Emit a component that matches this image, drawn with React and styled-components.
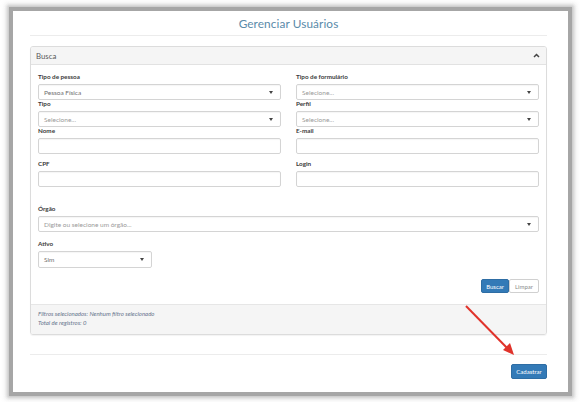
import React from "react";
import styled, { createGlobalStyle } from "styled-components";

const Global = createGlobalStyle`
  html, body { margin: 0; padding: 0; background: #ffffff; }
  body { width: 580px; height: 402px; overflow: hidden; font-family: Lato, "Open Sans", Arial, sans-serif; }
`;

const Frame = styled.div`
  position: relative;
  margin: 11px 0 0 13px;
  width: 555px;
  height: 381px;
  background: #fff;
  box-sizing: border-box;
  padding: 0 21px 0 17px;
  box-shadow: 0 0 0 4px #a6a6a6, 0 0 3px 6px rgba(160,160,160,0.5), 0 0 5px 8px rgba(215,215,215,0.35);
`;

const TitleBar = styled.div`
  height: 24px;
  border-bottom: 1px solid #ececec;
  display: flex;
  align-items: center;
  justify-content: center;
`;

const Title = styled.h1`
  margin: 0;
  font-weight: 400;
  font-size: 11.8px;
  color: #5a8aa9;
  letter-spacing: 0.1px;
`;

const Panel = styled.section`
  margin-top: 10px;
  border: 1px solid #dcdcdc;
  border-radius: 3px;
  box-shadow: 0 1px 1px rgba(0,0,0,0.05);
  overflow: hidden;
`;

const PanelHeader = styled.div`
  height: 17px;
  background: #f5f5f5;
  border-bottom: 1px solid #e2e2e2;
  display: flex;
  align-items: center;
  justify-content: space-between;
  padding: 0 6px 0 5px;
  font-size: 7.8px;
  color: #5a5a5a;
`;

const PanelBody = styled.div`
  padding: 8px 7px 11px 7px;
`;

const Row = styled.div`
  display: grid;
  grid-template-columns: ${(p) => (p.$full ? "1fr" : "1fr 1fr")};
  column-gap: 15px;
  margin-top: ${(p) => p.$mt || 0}px;
`;

const Field = styled.div`
  display: flex;
  flex-direction: column;
  width: ${(p) => (p.$w ? p.$w + "px" : "auto")};
`;

const Label = styled.label`
  font-size: 6.3px;
  line-height: 8px;
  font-weight: 700;
  color: #3a3a3a;
  margin-bottom: 3px;
`;

const Box = styled.div`
  height: ${(p) => p.$h || 16}px;
  box-sizing: border-box;
  border: 1px solid #d4d4d4;
  border-radius: 2px;
  background: #fff;
  box-shadow: inset 0 1px 1px rgba(0,0,0,0.04);
  display: flex;
  align-items: center;
  justify-content: space-between;
  padding: 0 7px 0 5px;
  font-size: 6.5px;
  color: ${(p) => (p.$value ? "#707070" : "#9a9a9a")};
`;

const Caret = styled.span`
  width: 0;
  height: 0;
  border-left: 2.5px solid transparent;
  border-right: 2.5px solid transparent;
  border-top: 3px solid #444;
`;

const Actions = styled.div`
  display: flex;
  justify-content: flex-end;
  margin-top: 11px;
`;

const Btn = styled.button`
  height: 14px;
  box-sizing: border-box;
  padding: 0 ${(p) => p.$px || 5}px;
  font-family: inherit;
  font-size: 6px;
  border-radius: 2px;
  border: 1px solid ${(p) => (p.$primary ? "#2e6da4" : "#d0d0d0")};
  background: ${(p) => (p.$primary ? "#337ab7" : "#fff")};
  color: ${(p) => (p.$primary ? "#fff" : "#8a8a8a")};
`;

const Footer = styled.div`
  height: 30px;
  box-sizing: border-box;
  background: #f5f5f5;
  border-top: 1px solid #e6e6e6;
  padding: 4px 7px 0;
  font-size: 6px;
  line-height: 9px;
  font-style: italic;
  color: #66748c;
`;

const Divider = styled.hr`
  margin: 19px 0 0;
  border: 0;
  border-top: 1px solid #ececec;
`;

const Bottom = styled.div`
  display: flex;
  justify-content: flex-end;
  margin-top: 9px;
`;

const CadBtn = styled(Btn)`
  height: 15px;
  width: 36px;
  padding: 0;
`;

const Arrow = styled.svg`
  position: absolute;
  left: 448px;
  top: 290px;
  width: 60px;
  height: 55px;
  overflow: visible;
`;

function SelectBox({ text, value, h }) {
  return (
    <Box $value={value} $h={h}>
      <span>{text}</span>
      <Caret />
    </Box>
  );
}

export default function App() {
  return (
    <>
      <Global />
      <Frame>
        <TitleBar>
          <Title>Gerenciar Usuários</Title>
        </TitleBar>
        <Panel>
          <PanelHeader>
            <span>Busca</span>
            <svg width="7" height="5" viewBox="0 0 7 5">
              <path d="M1 4 L3.5 1.5 L6 4" fill="none" stroke="#444" strokeWidth="1.5" />
            </svg>
          </PanelHeader>
          <PanelBody>
            <Row>
              <Field>
                <Label>Tipo de pessoa</Label>
                <SelectBox text="Pessoa Física" value />
              </Field>
              <Field>
                <Label>Tipo de formulário</Label>
                <SelectBox text="Selecione..." />
              </Field>
            </Row>
            <Row>
              <Field>
                <Label>Tipo</Label>
                <SelectBox text="Selecione..." />
              </Field>
              <Field>
                <Label>Perfil</Label>
                <SelectBox text="Selecione..." />
              </Field>
            </Row>
            <Row>
              <Field>
                <Label>Nome</Label>
                <Box />
              </Field>
              <Field>
                <Label>E-mail</Label>
                <Box />
              </Field>
            </Row>
            <Row $mt={6}>
              <Field>
                <Label>CPF</Label>
                <Box />
              </Field>
              <Field>
                <Label>Login</Label>
                <Box />
              </Field>
            </Row>
            <Row $full $mt={18}>
              <Field>
                <Label>Órgão</Label>
                <SelectBox text="Digite ou  selecione um órgão..." />
              </Field>
            </Row>
            <Row $full $mt={8}>
              <Field $w={114}>
                <Label>Ativo</Label>
                <SelectBox text="Sim" value h={17} />
              </Field>
            </Row>
            <Actions>
              <Btn $primary $px={4}>Buscar</Btn>
              <Btn $px={5}>Limpar</Btn>
            </Actions>
          </PanelBody>
          <Footer>
            <div>Filtros selecionados: Nenhum filtro selecionado</div>
            <div>Total de registros: 0</div>
          </Footer>
        </Panel>
        <Divider />
        <Bottom>
          <CadBtn $primary>Cadastrar</CadBtn>
        </Bottom>
        <Arrow viewBox="0 0 60 55">
          <line x1="5" y1="5" x2="49" y2="50" stroke="#e0332b" strokeWidth="2" />
          <polygon points="53,54 42,49 49,42" fill="#e0332b" />
        </Arrow>
      </Frame>
    </>
  );
}
